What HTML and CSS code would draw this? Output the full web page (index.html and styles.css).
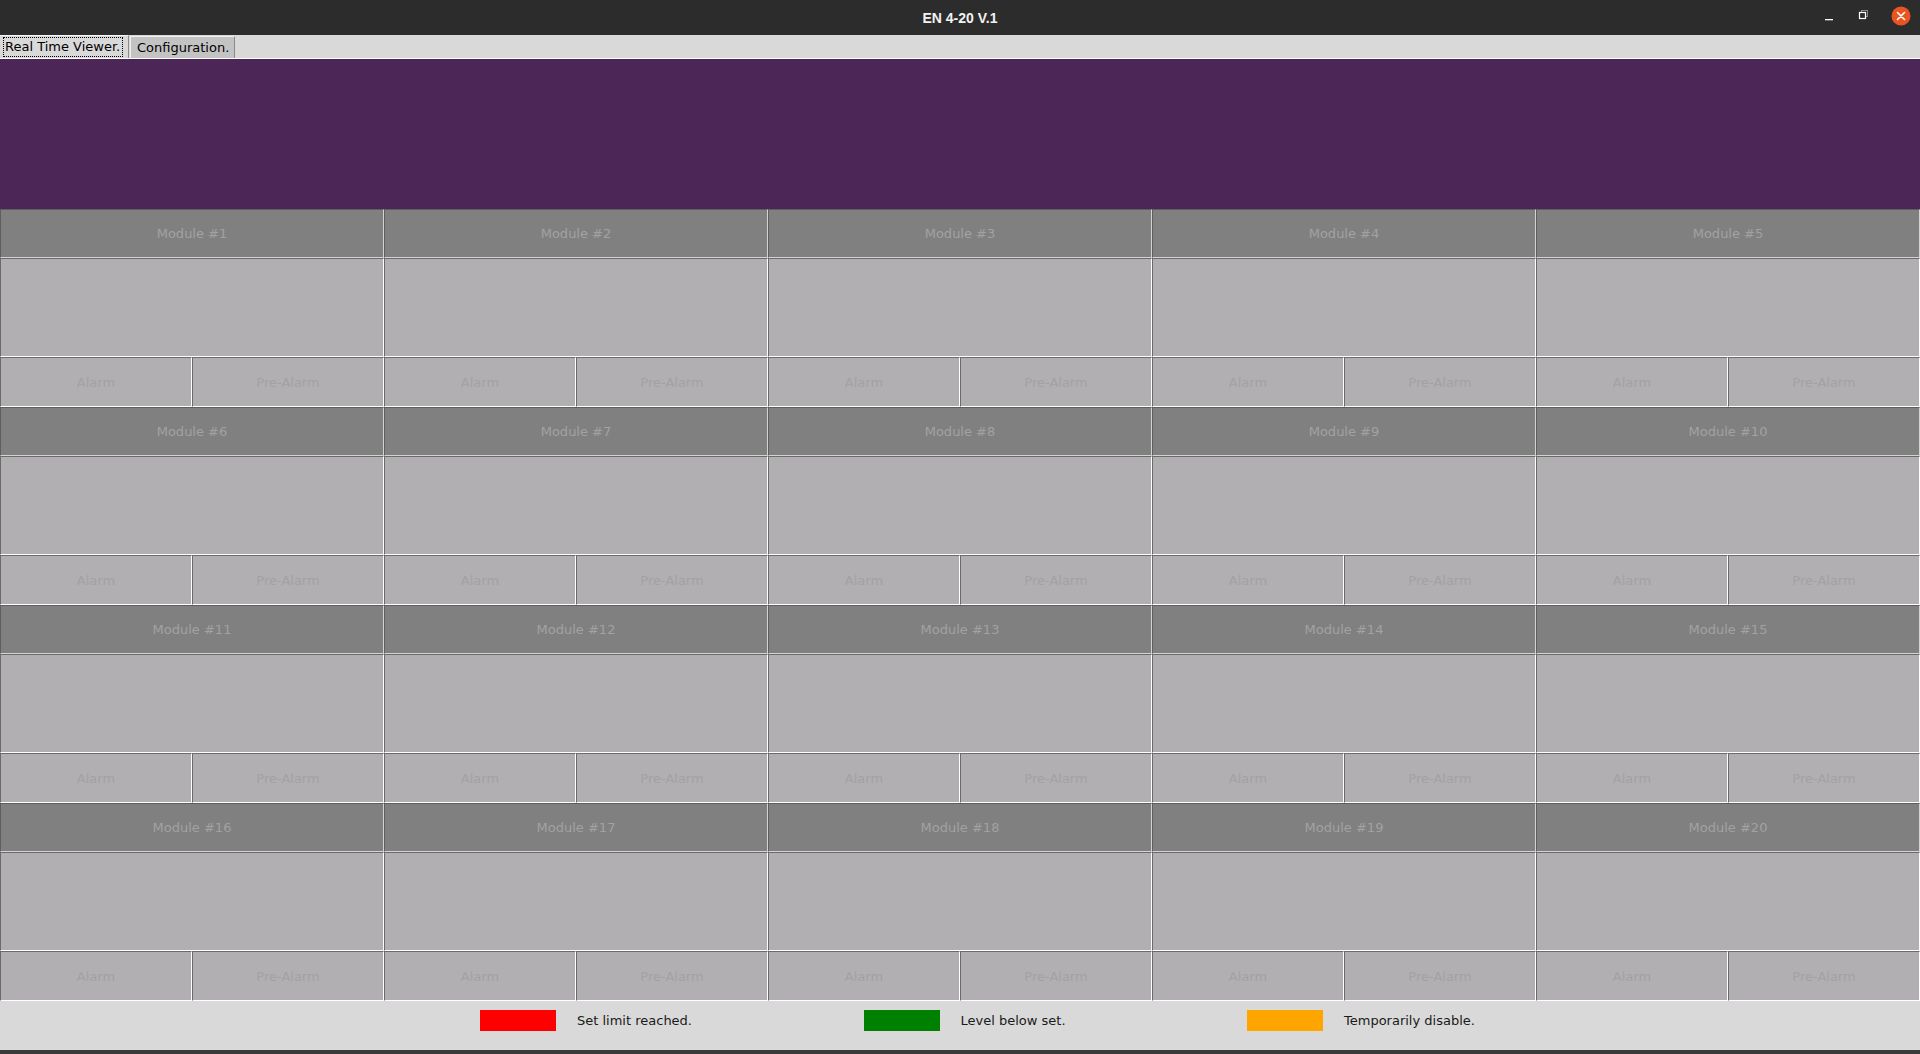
FILE: index.html
```html
<!DOCTYPE html>
<html>
<head>
<meta charset="utf-8">
<link rel="stylesheet" href="styles.css">
</head>
<body>
<div class="window">
  <div class="titlebar">
    <div class="title">EN 4-20 V.1</div>
    <div class="controls">
      <svg class="ctl" width="14" height="14" viewBox="0 0 14 14"><rect x="2" y="10" width="8" height="1.3" fill="#fff"/></svg>
      <svg class="ctl" width="14" height="14" viewBox="0 0 14 14"><rect x="4.5" y="1.5" width="6" height="6" fill="none" stroke="#8a8a8a" stroke-width="1"/><rect x="2.5" y="3.5" width="6" height="6" fill="#2c2c2c" stroke="#fff" stroke-width="1.2"/></svg>
      <svg class="ctl close" width="20" height="20" viewBox="0 0 20 20"><circle cx="10" cy="10" r="9.5" fill="#e95420"/><path d="M6.5 6.5 L13.5 13.5 M13.5 6.5 L6.5 13.5" stroke="#fff" stroke-width="1.6" stroke-linecap="round"/></svg>
    </div>
  </div>
  <div class="tabbar">
    <div class="tab active"><span class="focus">Real Time Viewer.</span></div>
    <div class="tab">Configuration.</div>
  </div>
  <div class="banner"></div>
  <div class="grid">
    <div class="module"><div class="mhead">Module #1</div><div class="mval"></div><div class="malarms"><div class="al">Alarm</div><div class="al">Pre-Alarm</div></div></div>
    <div class="module"><div class="mhead">Module #2</div><div class="mval"></div><div class="malarms"><div class="al">Alarm</div><div class="al">Pre-Alarm</div></div></div>
    <div class="module"><div class="mhead">Module #3</div><div class="mval"></div><div class="malarms"><div class="al">Alarm</div><div class="al">Pre-Alarm</div></div></div>
    <div class="module"><div class="mhead">Module #4</div><div class="mval"></div><div class="malarms"><div class="al">Alarm</div><div class="al">Pre-Alarm</div></div></div>
    <div class="module"><div class="mhead">Module #5</div><div class="mval"></div><div class="malarms"><div class="al">Alarm</div><div class="al">Pre-Alarm</div></div></div>
    <div class="module"><div class="mhead">Module #6</div><div class="mval"></div><div class="malarms"><div class="al">Alarm</div><div class="al">Pre-Alarm</div></div></div>
    <div class="module"><div class="mhead">Module #7</div><div class="mval"></div><div class="malarms"><div class="al">Alarm</div><div class="al">Pre-Alarm</div></div></div>
    <div class="module"><div class="mhead">Module #8</div><div class="mval"></div><div class="malarms"><div class="al">Alarm</div><div class="al">Pre-Alarm</div></div></div>
    <div class="module"><div class="mhead">Module #9</div><div class="mval"></div><div class="malarms"><div class="al">Alarm</div><div class="al">Pre-Alarm</div></div></div>
    <div class="module"><div class="mhead">Module #10</div><div class="mval"></div><div class="malarms"><div class="al">Alarm</div><div class="al">Pre-Alarm</div></div></div>
    <div class="module"><div class="mhead">Module #11</div><div class="mval"></div><div class="malarms"><div class="al">Alarm</div><div class="al">Pre-Alarm</div></div></div>
    <div class="module"><div class="mhead">Module #12</div><div class="mval"></div><div class="malarms"><div class="al">Alarm</div><div class="al">Pre-Alarm</div></div></div>
    <div class="module"><div class="mhead">Module #13</div><div class="mval"></div><div class="malarms"><div class="al">Alarm</div><div class="al">Pre-Alarm</div></div></div>
    <div class="module"><div class="mhead">Module #14</div><div class="mval"></div><div class="malarms"><div class="al">Alarm</div><div class="al">Pre-Alarm</div></div></div>
    <div class="module"><div class="mhead">Module #15</div><div class="mval"></div><div class="malarms"><div class="al">Alarm</div><div class="al">Pre-Alarm</div></div></div>
    <div class="module"><div class="mhead">Module #16</div><div class="mval"></div><div class="malarms"><div class="al">Alarm</div><div class="al">Pre-Alarm</div></div></div>
    <div class="module"><div class="mhead">Module #17</div><div class="mval"></div><div class="malarms"><div class="al">Alarm</div><div class="al">Pre-Alarm</div></div></div>
    <div class="module"><div class="mhead">Module #18</div><div class="mval"></div><div class="malarms"><div class="al">Alarm</div><div class="al">Pre-Alarm</div></div></div>
    <div class="module"><div class="mhead">Module #19</div><div class="mval"></div><div class="malarms"><div class="al">Alarm</div><div class="al">Pre-Alarm</div></div></div>
    <div class="module"><div class="mhead">Module #20</div><div class="mval"></div><div class="malarms"><div class="al">Alarm</div><div class="al">Pre-Alarm</div></div></div>
  </div>
  <div class="legend">
    <div class="litem"><span class="sw red"></span><span class="ltxt">Set limit reached.</span></div>
    <div class="litem"><span class="sw green"></span><span class="ltxt">Level below set.</span></div>
    <div class="litem"><span class="sw orange"></span><span class="ltxt">Temporarily disable.</span></div>
  </div>
  <div class="bottomedge"></div>
</div>
</body>
</html>
```

FILE: styles.css
```css
* { box-sizing: border-box; }
html, body { margin: 0; padding: 0; }
body {
  width: 1920px;
  height: 1054px;
  overflow: hidden;
  font-family: "DejaVu Sans", sans-serif;
  font-size: 13px;
  background: #d9d9d9;
}
.window { display: flex; flex-direction: column; width: 1920px; height: 1054px; }

.titlebar {
  height: 35px;
  background: #2c2c2c;
  display: flex;
  align-items: center;
  justify-content: center;
  position: relative;
}
.title {
  font-family: "Liberation Sans", sans-serif;
  font-weight: bold;
  font-size: 14px;
  color: #f2f2f2;
  padding-top: 1px;
}
.controls {
  position: absolute;
  right: 9px;
  top: 6px;
  display: flex;
  align-items: center;
  gap: 20px;
}
.ctl { display: block; }

.tabbar {
  height: 24px;
  background: #d9d9d9;
  border-bottom: 1px solid #ffffff;
  display: flex;
  align-items: stretch;
}
.tab {
  display: flex;
  align-items: center;
  color: #000;
  line-height: 16px;
}
.tab.active {
  width: 129px;
  padding-left: 4px;
  border-top: 1px solid #f4f4f4;
  border-right: 1px solid #8c8c8c;
}
.tab.active .focus {
  outline: 1px dotted #000;
  outline-offset: 0;
  padding: 1px 2px 1px 1px;
}
.tab:not(.active) {
  margin-top: 1px;
  margin-left: 1px;
  width: 105px;
  padding-left: 6px;
  background: #c3c3c3;
  border-top: 1px solid #f0f0f0;
  border-left: 1px solid #f0f0f0;
  border-right: 1px solid #8a8a8a;
}

.banner {
  height: 150px;
  background: #4b2657;
}

.grid {
  display: grid;
  grid-template-columns: repeat(5, 384px);
  grid-auto-rows: 198px;
}
.module { display: flex; flex-direction: column; }
.mhead {
  height: 49px;
  background: #808080;
  color: #a2a2a2;
  display: flex;
  align-items: center;
  justify-content: center;
  border-top: 1px solid #5e5e5e;
  border-left: 1px solid #5e5e5e;
  border-bottom: 1px solid #d4d4d4;
  border-right: 1px solid #d4d4d4;
}
.mval {
  height: 99px;
  background: #b1afb1;
  border-top: 1px solid #6a6a6a;
  border-left: 1px solid #6a6a6a;
  border-bottom: 1px solid #ffffff;
  border-right: 1px solid #ffffff;
}
.malarms {
  height: 50px;
  display: grid;
  grid-template-columns: 192px 192px;
}
.al {
  background: #b1afb1;
  color: #a3a1a3;
  display: flex;
  align-items: center;
  justify-content: center;
  border-top: 1px solid #6a6a6a;
  border-left: 1px solid #6a6a6a;
  border-bottom: 1px solid #ffffff;
  border-right: 1px solid #ffffff;
}

.legend {
  height: 49px;
  background: #d9d9d9;
  display: flex;
  align-items: flex-start;
  padding-left: 480px;
  padding-top: 9px;
}
.litem {
  width: 383.5px;
  display: flex;
  align-items: center;
  height: 21px;
}
.sw { width: 76px; height: 21px; display: block; }
.sw.red { background: #ff0000; }
.sw.green { background: #008000; }
.sw.orange { background: #ffa500; }
.ltxt { margin-left: 21px; color: #1a1a1a; }

.bottomedge {
  height: 4px;
  background: #3a3a3a;
}
```
